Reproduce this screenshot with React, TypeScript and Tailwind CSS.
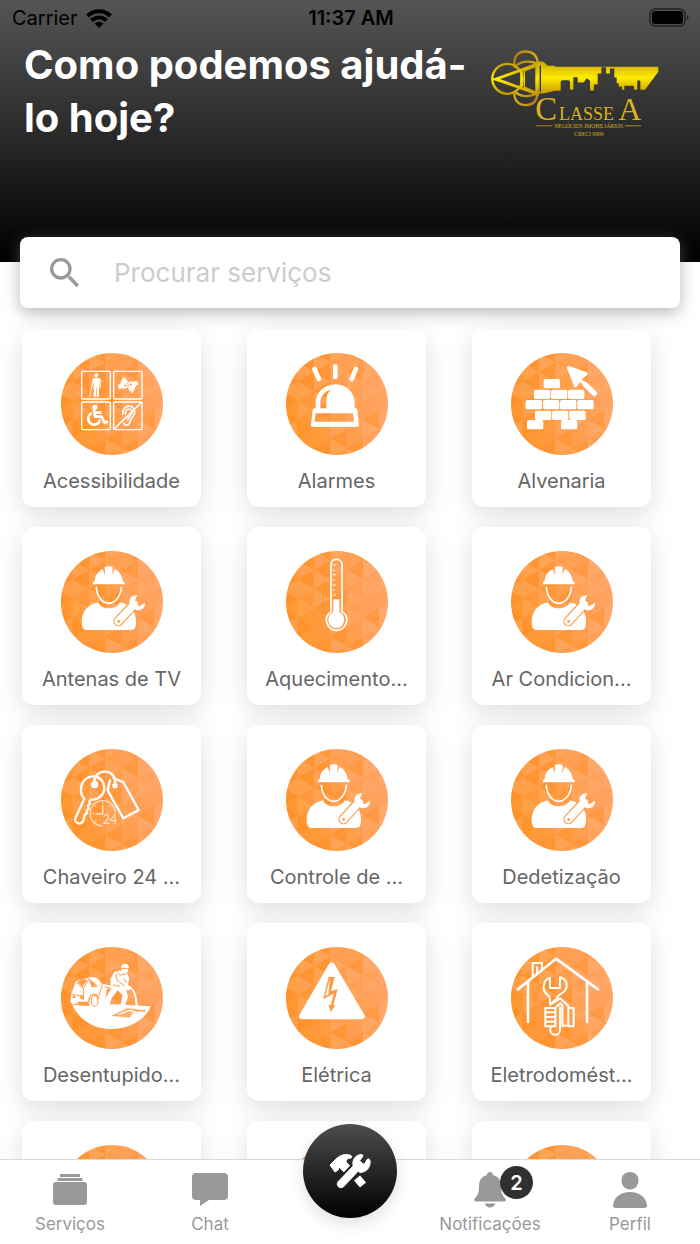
import { useId, useState } from 'react'
import type { ReactNode } from 'react'
import { FaAmericanSignLanguageInterpreting, FaBlind, FaWheelchair } from 'react-icons/fa'
import { MdSearch } from 'react-icons/md'

interface Service {
  id: number
  label?: string
  icon?: ReactNode
}

// One string per column, one digit per triangle: 0-2 darkens, 3-5 leaves as is, 6-9 lightens
const MOSAIC = [
  '3414260518423',
  '0527163942514',
  '4160728153406',
  '5738452647183',
  '3251836494527',
  '4846573528364',
  '6493754682547',
]

function shade(digit: number) {
  if (digit < 3) return 'rgba(255,138,26,0.32)'
  if (digit > 5) return 'rgba(255,184,134,0.26)'
  return 'none'
}

function Mosaic() {
  const side = 57
  const width = 49

  return (
    <>
      {MOSAIC.flatMap((digits, column) =>
        digits.split('').map((digit, i) => {
          const left = -14 + column * width
          const right = left + width
          const top = -57 + i * (side / 2)
          const [base, apex] = (column + i) % 2 === 0 ? [left, right] : [right, left]
          return (
            <polygon
              key={`${column}-${i}`}
              points={`${base},${top} ${base},${top + side} ${apex},${top + side / 2}`}
              fill={shade(Number(digit))}
            />
          )
        })
      )}
    </>
  )
}

function IconDisc({ children }: { children?: ReactNode }) {
  const id = useId()

  return (
    <svg viewBox="0 0 306 306" className="size-[102px]" aria-hidden="true">
      <defs>
        <linearGradient id={`${id}-fill`} x1="0" y1="0.6" x2="1" y2="0.4">
          <stop offset="0" stopColor="#ff962e" />
          <stop offset="0.5" stopColor="#ff9d49" />
          <stop offset="1" stopColor="#ffa465" />
        </linearGradient>
        <clipPath id={`${id}-clip`}>
          <circle cx="153" cy="153" r="153" />
        </clipPath>
      </defs>
      <g clipPath={`url(#${id}-clip)`}>
        <rect width="306" height="306" fill={`url(#${id}-fill)`} />
        <Mosaic />
      </g>
      {children}
    </svg>
  )
}

function AccessibilityIcon() {
  return (
    <g transform="translate(-33 -40)" fill="none" stroke="#fff" strokeWidth="4">
      <rect x="95" y="95" width="86" height="83" rx="4" />
      <rect x="191" y="95" width="85" height="83" rx="4" />
      <rect x="95" y="187" width="86" height="83" rx="4" />
      <rect x="191" y="187" width="85" height="83" rx="4" />
      <g stroke="none" fill="#fff" color="#fff">
        <circle cx="139" cy="107" r="6" />
        <path d="M131 115h16q5 1 5 7v22h-4v-20h-1v47h-7v-27h-2v27h-7v-47l-11 47h-2l9-45q0-10 4-11z" />
        <FaAmericanSignLanguageInterpreting x={203} y={105} size={62} strokeWidth={0} />
        <FaWheelchair x={111} y={195} size={64} strokeWidth={0} />
      </g>
      <path d="M191 269l85-82" strokeWidth="5" />
      <path d="M218 223c0-30 36-31 36-6 0 16-12 16-14 29-2 12-14 14-18 5M226 222c0-18 20-18 20-4 0 10-10 11-13 22" strokeWidth="5" strokeLinecap="round" />
    </g>
  )
}

function SirenIcon() {
  return (
    <g transform="translate(-33 -39)">
      <g stroke="#fff" strokeWidth="14" strokeLinecap="round">
        <path d="M181 79v32M118 87l14 30M243 87l-13 30" />
      </g>
      <path
        fill="#fff"
        fillRule="evenodd"
        d="M122 205v-15c0-32 25-57 59-57s58 25 58 57v15h4q4 0 4 5l5 46q0 5-5 5H113q-6 0-5-6l5-45q0-5 5-5zM136 205h18v-20q0-25 14-36c-20 5-32 20-32 39zM122 220l-3 25h118l-3-25z"
      />
    </g>
  )
}

const BRICKS = [
  [131, 117], [102, 149], [153, 149], [204, 149], [77, 180], [129, 180], [180, 180], [232, 180],
  [105, 212], [156, 212], [208, 212], [81, 240], [183, 240],
]

function BricksIcon() {
  return (
    <g transform="translate(-33 -39)" fill="#fff">
      {BRICKS.map(([x, y]) => (
        <rect key={`${x}-${y}`} x={x} y={y} width="49" height="28" rx="5" />
      ))}
      <path d="M203 80q2-2 6-1l51 18q5 2 3 7l-14 11q-4 4-7 9l-11 15q-4 6-8 1l-22-55q-1-4 2-5z" />
      <path d="M240 120l16 14" stroke="#fff" strokeWidth="9" />
      <path d="M256 134l27 26" stroke="#fff" strokeWidth="16" strokeLinecap="round" />
    </g>
  )
}

function WorkerIcon() {
  return (
    <g transform="translate(-33 -32)">
      <path fill="#fff" d="M129 132v-5q0-4 5-4 0-25 24-37l7 19-1-25q12-5 24 0l-1 25 7-19c16 8 23 22 24 37q6 0 6 5v4z" />
      <path fill="none" stroke="#fff" strokeWidth="5" d="M139 139c1 28 17 50 37 50s37-22 38-50" />
      <path fill="#fff" d="M144 186c6 13 18 18 32 18s27-5 34-18c29 6 48 25 48 57 0 20-4 26-15 26H110c-11 0-15-10-15-24 0-33 20-53 49-59z" />
      <path stroke="#ff9b46" strokeWidth="30" strokeLinecap="round" d="M205 243l38-42" />
      <path stroke="#fff" strokeWidth="23" strokeLinecap="round" d="M205 243l47-51" />
      <path fill="#fff" d="M262 165c-20-1-27 15-22 27l19 18c17 0 27-8 26-23l-16 10-12-3-2-14z" />
      <circle cx="206" cy="243" r="4" fill="#ff9b46" />
    </g>
  )
}

function ThermometerIcon() {
  return (
    <g transform="translate(-708 -32)">
      <path fill="none" stroke="#fff" strokeWidth="5" d="M843 214V72c0-20 33-20 33 0v142c29 20 9 56-17 56s-43-37-16-56z" />
      <path fill="#fff" d="M850 177h18v38c25 13 15 48-9 48s-35-35-9-48z" />
      <path stroke="#fff" strokeWidth="3" d="M848 74h10M848 89h6M848 103h10M848 119h6M848 134h10M848 149h6M848 164h10" />
    </g>
  )
}

function KeysIcon() {
  return (
    <g transform="translate(-33 -24)" fill="none" stroke="#fff" strokeLinecap="round" strokeLinejoin="round">
      <g stroke="#ffe2cc" strokeWidth="4">
        <path d="M196 216a38 38 0 1 0-40 39" strokeDasharray="32 4" />
        <path d="M158 194v25h-18" strokeWidth="5" />
        <path d="M158 184v5M126 218h5M134 194l4 3M182 194l-4 3M134 242l4-3" strokeWidth="3" />
      </g>
      <path strokeWidth="7" d="M103 173c-15-14-13-43 3-58 20-18 55-7 57 24 1 22-20 41-41 36l-4 7 2 7-6 5 2 8-6 6 1 8-7 6-4 17c-6 15-29 8-24-7z" />
      <circle cx="134" cy="131" r="11" fill="#fff" stroke="none" />
      <path strokeWidth="7" d="M134 128c-4-24 14-38 34-36 19 2 30 17 27 37" />
      <circle cx="195" cy="134" r="8" fill="#fff" stroke="none" />
      <path strokeWidth="7" d="M180 118l-7 30 47 84 46-25-46-83-29-13" />
      <text x="158" y="250" className="font-['Lato',sans-serif] text-[38px]" fill="#ffe8d8" stroke="none">24</text>
    </g>
  )
}

function UncloggingIcon() {
  return (
    <g transform="translate(-33 -33)">
      <path fill="#fff" d="M67 205c28 8 56 2 75 3h18l30-3 112 6c-10 31-55 68-119 68-56 0-101-33-116-74z" />
      <path fill="#fff" d="M64 174l14-38 45-13c18-2 28 12 32 20l25 5 5 5-7 56-56 2-15-14-40 8-6-7z" />
      <g fill="none" stroke="#ff9b46" strokeWidth="3">
        <path d="M80 140l20 17 18-29 7 24 18-1M100 157v35M67 176l35 4M157 145l-10 34M163 153l14 2" />
        <path d="M117 198c-1-26 24-30 30-9" strokeWidth="4" />
        <ellipse cx="134" cy="195" rx="10" ry="16" />
      </g>
      <path fill="#ff9b46" d="M82 137l15 15 15-20-10-2zM119 130l7 21 15-4zM68 179h8v7h-8zM91 181h9v8h-9zM79 197h37l2 11H98z" />
      <path fill="#ff9b46" d="M170 160l18-8-5 45-8 11h-10z" />
      {/* Worker with the suction hose */}
      <path fill="#fff" d="M213 90q8-10 20-5l5 10-3 4-3 11-10 3-7-8zM210 104l20 8 8 14-4 20 10 7-4 10-12-2 6 20-8 26-15 2 7-31-15-15-18 24-9 28-16-2 9-30 14-25-2-28 12-23z" />
      <path fill="none" stroke="#ff9b46" strokeWidth="3" d="M214 97h24M197 113l4 19 23 18M202 109l10 8 16-3M189 147l21 4M221 127l9 14M207 173l-9 28" />
      <path fill="none" stroke="#fff" strokeWidth="4" d="M240 155c18 5 21 40 22 68M245 158c17 20 10 45 16 67" />
      <path fill="#fbb070" stroke="#ff9b46" strokeWidth="2" d="M187 239l44-21 57 6-16 6-27 2-5 11z" />
      <path fill="none" stroke="#fff" strokeWidth="4" d="M207 235l30-12 18 5M250 231l28-3" />
    </g>
  )
}

function ElectricIcon() {
  return (
    <g transform="translate(-33 -33)">
      <path fill="#fff" stroke="#fff" strokeWidth="18" strokeLinejoin="round" d="M170 88l90 153H81z" />
      <path fill="#ff9b46" d="M161 123h18l-11 43 20-7-13 49h6l-14 21-6-23h7l8-33-32 17z" />
      <path fill="#fff" d="M165 127l-14 53 9-4z" />
    </g>
  )
}

function HomeRepairIcon() {
  return (
    <g transform="translate(-708 -33)" fill="none" stroke="#fff" strokeWidth="8" strokeLinecap="round" strokeLinejoin="round">
      <path d="M729 160L843 68l126 92M759 139v119M936 139v119" />
      <path d="M773 120V81h28v17M786 107V94" strokeWidth="6" />
      <g strokeWidth="6">
        <path d="M825 125c-22 6-25 38-8 51q8 6 8 14v16l20-18c0-8 4-9 9-12 32-17 24-46 1-52v32h-30z" />
        <path d="M811 216h30v55h-30zM811 229h27M811 243h27M811 257h27M826 206l29-19 25 22v60M845 211l12-9 5 7v60h16M881 216h15v55h-15M826 272v9c0 20 29 20 29 0v-66" />
      </g>
    </g>
  )
}

const SERVICES: Service[] = [
  { id: 1, label: 'Acessibilidade', icon: <AccessibilityIcon /> },
  { id: 2, label: 'Alarmes', icon: <SirenIcon /> },
  { id: 3, label: 'Alvenaria', icon: <BricksIcon /> },
  { id: 4, label: 'Antenas de TV', icon: <WorkerIcon /> },
  { id: 5, label: 'Aquecimento...', icon: <ThermometerIcon /> },
  { id: 6, label: 'Ar Condicion...', icon: <WorkerIcon /> },
  { id: 7, label: 'Chaveiro 24 ...', icon: <KeysIcon /> },
  { id: 8, label: 'Controle de ...', icon: <WorkerIcon /> },
  { id: 9, label: 'Dedetização', icon: <WorkerIcon /> },
  { id: 10, label: 'Desentupido...', icon: <UncloggingIcon /> },
  { id: 11, label: 'Elétrica', icon: <ElectricIcon /> },
  { id: 12, label: 'Eletrodomést...', icon: <HomeRepairIcon /> },
  { id: 13 },
  { id: 14 },
  { id: 15 },
]

function ServiceCard({ label, icon }: Service) {
  return (
    <button
      type="button"
      className="flex h-[178px] flex-col items-center rounded-xl bg-white pt-6 shadow-[0_8px_26px_rgba(0,0,0,0.13)]"
    >
      <IconDisc>{icon}</IconDisc>
      {label && <span className="mt-3.5 text-[20px] leading-6 whitespace-nowrap text-[#666]">{label}</span>}
    </button>
  )
}

function StatusBar() {
  return (
    <div className="grid grid-cols-3 items-center pt-1.5 pr-2.5 pl-3 text-[20px] leading-6 text-black">
      <div className="flex items-center gap-2">
        <span>Carrier</span>
        <svg viewBox="0 0 26 19" className="h-[19px] w-[26px]" aria-hidden="true">
          <g fill="none" stroke="#000" strokeWidth="4">
            <path d="M1.500 7C8 0.500 18 0.500 24.500 7" />
            <path d="M5.500 11.500c4.500-4 10.500-4 15 0" />
          </g>
          <path d="M8.500 14.500q4.500-3.500 9 0L13 19z" />
        </svg>
      </div>
      <span className="text-center font-semibold">11:37 AM</span>
      <svg viewBox="0 0 41 20" className="h-5 w-[41px] justify-self-end" role="img" aria-label="Bateria">
        <rect x="1" y="1" width="35" height="17" rx="5" fill="none" stroke="#222" strokeWidth="1.500" />
        <rect x="3" y="3" width="31" height="13" rx="3" />
        <path d="M38 7q3 2.500 0 6z" fill="#222" />
      </svg>
    </div>
  )
}

function Logo() {
  return (
    <svg viewBox="0 0 504 260" className="h-[87px] w-[168px] shrink-0" role="img" aria-label="Classe A">
      <defs>
        <linearGradient id="gold" x1="0" y1="0" x2="0" y2="1">
          <stop offset="0" stopColor="#c9a400" />
          <stop offset="0.500" stopColor="#ffec00" />
          <stop offset="1" stopColor="#c79b00" />
        </linearGradient>
        <linearGradient id="bronze" x1="0" y1="0" x2="1" y2="1">
          <stop offset="0" stopColor="#b07c10" />
          <stop offset="0.500" stopColor="#d8b010" />
          <stop offset="1" stopColor="#b07c10" />
        </linearGradient>
      </defs>
      <g transform="translate(-32 -152)">
        <g fill="none" stroke="url(#bronze)" strokeWidth="7">
          <path d="M103 202c-5-28 8-46 32-46s38 14 37 38M103 276c-4 26 11 41 34 41 21 0 33-14 34-32" />
          <path d="M102 205c13-20 45-24 69-12M102 273c14 20 48 22 70 7" />
        </g>
        <circle cx="81" cy="238" r="45" fill="none" stroke="url(#gold)" strokeWidth="7" />
        <path fill="none" stroke="url(#gold)" strokeWidth="9" d="M171 194L46 239l125 44zM124 215v47" />
        <path fill="none" stroke="url(#gold)" strokeWidth="4" d="M132 214l35-13v77l-35-15z" />
        <path
          fill="url(#gold)"
          d="M172 186h17l13 13h20l4 3h308v15l-40 54h-14v-28h-9v28h-10v-12h-29v12h-7v-10h-10v-10h-6v-17h-7v-27h-13v15h-12v-19h-14v19h-11v33h-11v18h-12v-29l-10-8-9 13h-18v-16h-13v38h-10v-25l-4-4h-20l-4 4v28h-18l-19 5-16 3h-12z"
        />
        <path d="M180 198v79" stroke="#333" strokeWidth="4" />
        <g className="font-['Liberation_Serif',serif]" fill="#d9b21c">
          <text x="165" y="361" className="text-[98px]">C</text>
          <text x="236" y="361" className="text-[54px]">LASSE</text>
          <text x="414" y="361" className="text-[96px]">A</text>
          <text x="325" y="386" textAnchor="middle" className="text-[17px]">NEGÓCIOS IMOBILIÁRIOS</text>
          <text x="326" y="410" textAnchor="middle" className="text-[17px]">CRECI 9999</text>
        </g>
        <path d="M168 379h48M434 379h48" stroke="#b58d1c" strokeWidth="3" />
      </g>
    </svg>
  )
}

function ToolsIcon() {
  return (
    <svg viewBox="0 0 42 35" className="h-[35px] w-[42px]" fill="none" aria-hidden="true">
      <path fill="#fff" d="M1 11l6-6q6-6 14-4 3 1 1 3-5 0-5 4l4 4-6 6-5-5-1 3-3 2z" stroke="#fff" strokeLinejoin="round" />
      <path d="M28 24l6 7" stroke="#fff" strokeWidth="8" />
      <path d="M11 31l16-17" stroke="#242424" strokeWidth="12" />
      <path d="M12 30l18-19" stroke="#fff" strokeWidth="8" strokeLinecap="round" />
      <path fill="#fff" d="M33 .500c-8 0-11 8-8 13l6 5c6 0 11-5 10-12q-1-3-3-1l-2 4-4 1-2-3 3-4q2-2 0-3z" stroke="#fff" strokeLinejoin="round" />
    </svg>
  )
}

function AlbumsIcon() {
  return (
    <svg viewBox="0 0 36 36" className="size-9" fill="currentColor" aria-hidden="true">
      <path d="M8 2h20v3H8zM5.500 6h25v3h-25z" />
      <rect x="1" y="10" width="34" height="23" rx="3" />
    </svg>
  )
}

function ChatIcon() {
  return (
    <svg viewBox="0 0 36 36" className="size-9" fill="currentColor" aria-hidden="true">
      <path d="M4 1h28q4 0 4 4v19q0 4-4 4H17l-9 6v-6H4q-4 0-4-4V5q0-4 4-4z" />
    </svg>
  )
}

function BellIcon() {
  return (
    <svg viewBox="0 0 36 36" className="size-9" fill="currentColor" aria-hidden="true">
      <path d="M18 0c2.500 0 3 1.500 3 3 6 1.500 8 6 8 11 0 8 2 10 4 12 2 3 0 3.500-2 3.500H5c-2 0-4-.5-2-3.500 2-2 4-4 4-12 0-5 2-9.500 8-11 0-1.500.5-3 3-3z" />
      <path d="M12.500 31.500h11q-2 4-5.500 4t-5.500-4z" />
    </svg>
  )
}

function PersonIcon() {
  return (
    <svg viewBox="0 0 36 36" className="size-9" fill="currentColor" aria-hidden="true">
      <path d="M18 0c5 0 8.500 3.500 8.500 8.500S23 17.500 18 17.500 9.500 13.500 9.500 8.500 13 0 18 0z" />
      <path d="M1.500 35q-1-1 0-4C3 24 10 20 18 20s15 4 16.500 11q1 3 0 4-.5 1-2 1h-29q-1.500 0-2-1z" />
    </svg>
  )
}

interface TabProps {
  label: string
  icon: ReactNode
  badge?: number
}

function Tab({ label, icon, badge }: TabProps) {
  return (
    <a href="#" className="flex flex-col items-center gap-1.5 text-[#999]">
      <span className="relative">
        {icon}
        {badge && (
          <span className="absolute -top-1.5 left-7 flex size-[33px] items-center justify-center rounded-full bg-[#303030] text-[20px] font-semibold text-white">
            {badge}
          </span>
        )}
      </span>
      <span className="text-[17px] leading-5">{label}</span>
    </a>
  )
}

export default function App() {
  const [query, setQuery] = useState('')

  return (
    <div className="flex h-screen flex-col bg-white font-['Inter',sans-serif]">
      <main className="flex-1 overflow-x-hidden overflow-y-auto [scrollbar-width:none]">
        <header className="h-[262px] bg-linear-to-b/srgb from-[#555] to-black">
          <StatusBar />
          <div className="flex items-start justify-between pt-2 pr-[41px] pl-6">
            <h1 className="flex-1 text-[40px] leading-[53px] font-bold text-white">Como podemos ajudá-lo hoje?</h1>
            <div className="pt-3">
              <Logo />
            </div>
          </div>
        </header>

        <label className="relative mx-5 -mt-[25px] flex h-[71px] items-center gap-[29px] rounded-lg bg-white pl-[25px] shadow-[0_5px_16px_rgba(128,128,128,0.55)]">
          <MdSearch className="size-10 shrink-0 text-[#999]" />
          <input
            type="text"
            value={query}
            onChange={(event) => setQuery(event.target.value)}
            placeholder="Procurar serviços"
            aria-label="Procurar serviços"
            className="min-w-0 flex-1 bg-transparent text-[26px] text-[#444] outline-none placeholder:text-[#ccc]"
          />
        </label>

        <section className="grid grid-cols-3 gap-x-[46px] gap-y-5 pt-[21px] pr-[49px] pb-5 pl-[22px]">
          {SERVICES.map((service) => (
            <ServiceCard key={service.id} {...service} />
          ))}
        </section>
      </main>

      <nav className="relative grid grid-cols-5 border-t border-[#d8d8d8] bg-white pt-3 pb-2.5">
        <Tab label="Serviços" icon={<AlbumsIcon />} />
        <Tab label="Chat" icon={<ChatIcon />} />
        <div className="flex justify-center">
          <button
            type="button"
            aria-label="Solicitar serviço"
            className="-mt-12 -mb-9 flex size-[94px] items-center justify-center rounded-full bg-linear-to-b/srgb from-[#4d4d4d] to-black shadow-[0_6px_16px_rgba(0,0,0,0.12)]"
          >
            <ToolsIcon />
          </button>
        </div>
        <Tab label="Notificações" icon={<BellIcon />} badge={2} />
        <Tab label="Perfil" icon={<PersonIcon />} />
      </nav>
    </div>
  )
}
